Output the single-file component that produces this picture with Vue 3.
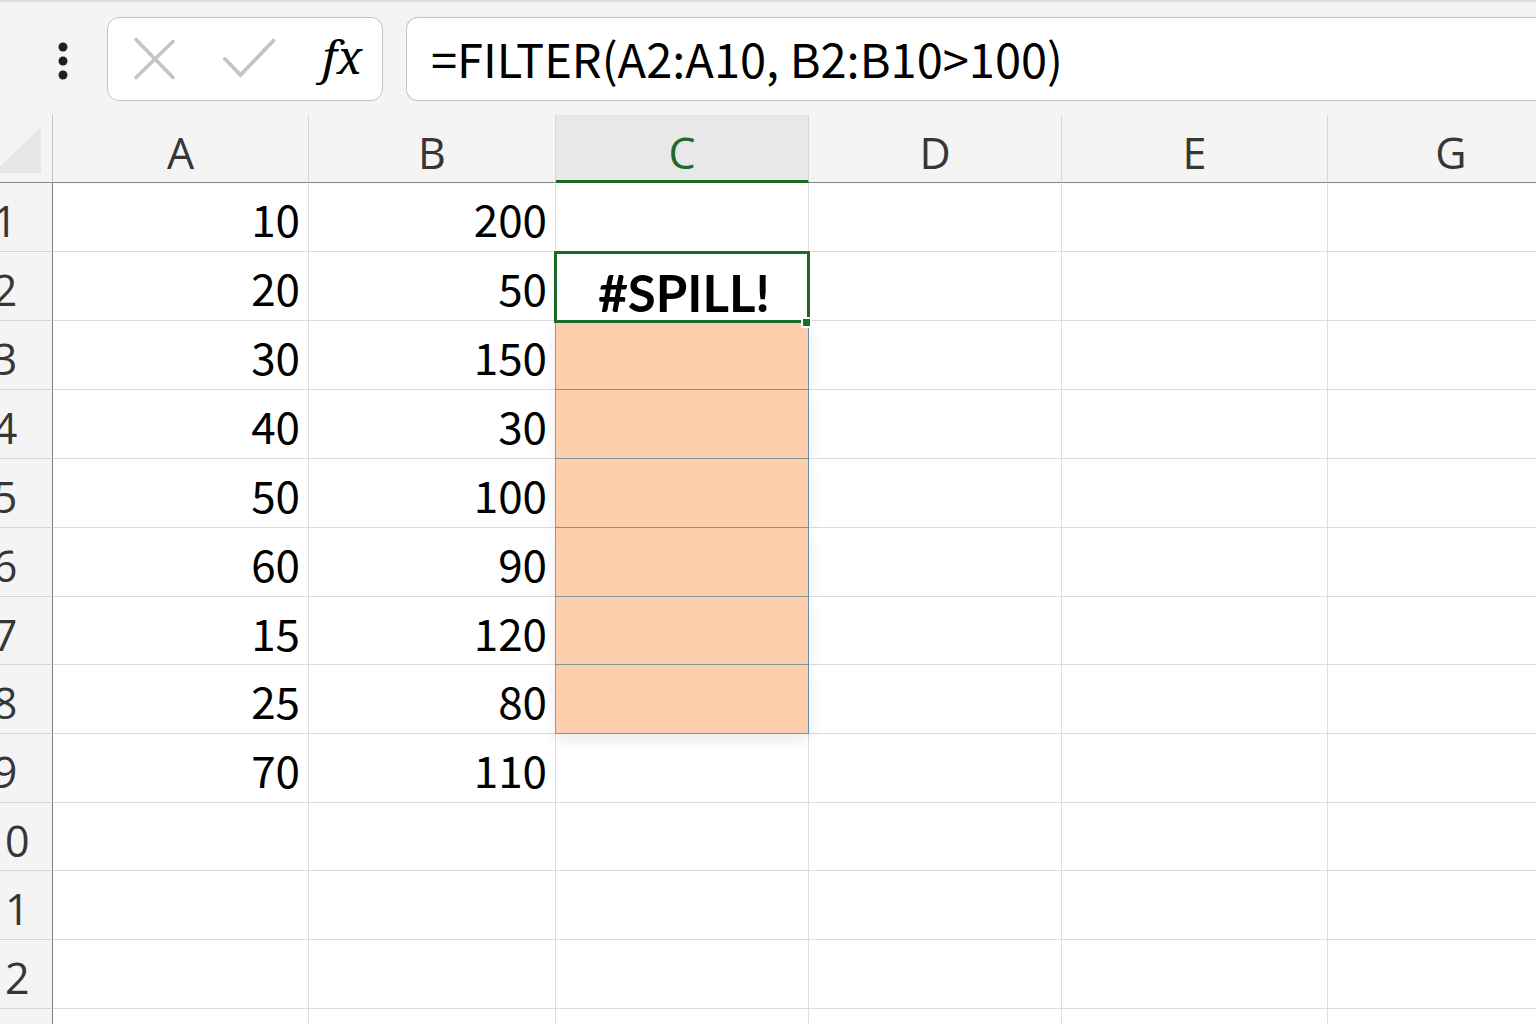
<script setup>
import { ref } from 'vue'

const formula = ref('=FILTER(A2:A10, B2:B10>100)')
const columns = ['A', 'B', 'C', 'D', 'E', 'G']
const activeColumn = 'C'
const activeRow = 2
const spillRange = { column: 'C', from: 3, to: 8 }

const values = [
  [10, 200], [20, 50], [30, 150], [40, 30], [50, 100],
  [60, 90], [15, 120], [25, 80], [70, 110],
]

const rows = Array.from({ length: 12 }, (_, i) => {
  const [a = '', b = ''] = values[i] || []
  return {
    number: i + 1,
    cells: { A: a, B: b, C: i + 1 === activeRow ? '#SPILL!' : '' },
  }
})

function cellClass(column, row) {
  const inSpill = column === spillRange.column && row >= spillRange.from && row <= spillRange.to
  return {
    active: column === activeColumn && row === activeRow,
    spill: inSpill,
    'spill-end': inSpill && row === spillRange.to,
  }
}
</script>

<template>
  <main class="app">
    <header class="formula-bar">
      <button class="more" type="button" aria-label="More options">
        <svg width="10" height="38" viewBox="0 0 10 38" fill="#1f2020">
          <circle cx="5" cy="5" r="4.5" />
          <circle cx="5" cy="19" r="4.5" />
          <circle cx="5" cy="33" r="4.5" />
        </svg>
      </button>
      <div class="actions">
        <button type="button" aria-label="Cancel">
          <svg width="42" height="44" viewBox="0 0 42 44" fill="none" stroke="#c4c4c4" stroke-width="3.6" stroke-linecap="round">
            <path d="M3 2.5 40 40.5M40 4.5 3 40.5" />
          </svg>
        </button>
        <button type="button" aria-label="Enter">
          <svg width="54" height="44" viewBox="0 0 54 44" fill="none" stroke="#c4c4c4" stroke-width="3.8" stroke-linecap="round">
            <path d="M3 22 18.500 38 51.500 3.500" />
          </svg>
        </button>
        <button class="fx" type="button" aria-label="Insert function">fx</button>
      </div>
      <input v-model="formula" class="formula" type="text" aria-label="Formula" spellcheck="false" />
    </header>

    <div class="sheet">
      <table>
        <colgroup>
          <col class="w-head" />
          <col v-for="c in columns" :key="c" :class="'w-' + c.toLowerCase()" />
        </colgroup>
        <thead>
          <tr>
            <th class="corner">
              <svg width="48" height="46" viewBox="0 0 48 46" fill="#e6e6e6" aria-hidden="true">
                <path d="M48 0V46H0z" />
              </svg>
            </th>
            <th v-for="c in columns" :key="c" scope="col" :class="{ selected: c === activeColumn }">{{ c }}</th>
          </tr>
        </thead>
        <tbody>
          <tr v-for="r in rows" :key="r.number">
            <th scope="row">{{ r.number }}</th>
            <td v-for="c in columns" :key="c" :class="cellClass(c, r.number)">{{ r.cells[c] }}</td>
          </tr>
          <tr>
            <th></th>
            <td v-for="c in columns" :key="c"></td>
          </tr>
        </tbody>
      </table>
    </div>
  </main>
</template>

<style>
body {
  background: #f4f4f4;
}
</style>

<style scoped>
.app {
  height: 100vh;
  display: flex;
  flex-direction: column;
  overflow: hidden;
  background: #f4f4f4;
  border-top: 2px solid #dcdcdc;
  box-sizing: border-box;
}

.formula-bar {
  display: flex;
  align-items: center;
  padding: 15px 0 14px 58px;
}

button {
  display: flex;
  padding: 0;
  border: 0;
  background: none;
}

.more {
  padding-top: 4px;
}

.actions {
  display: flex;
  align-items: center;
  justify-content: space-between;
  box-sizing: border-box;
  width: 276px;
  height: 84px;
  margin: 0 23px 0 39px;
  padding: 0 20px 0 25px;
  border: 1px solid #c3c3c3;
  border-radius: 12px;
  background: #fff;
}

.fx {
  padding-bottom: 6px;
  font: italic 46px/56px "Noto Serif", serif;
  color: #000;
}

.formula {
  flex: 1;
  min-width: 0;
  box-sizing: border-box;
  height: 84px;
  padding: 0 24px 4px;
  border: 1px solid #c3c3c3;
  border-right: 0;
  border-radius: 12px 0 0 12px;
  background: #fff;
  font: 47px "Noto Sans CJK SC", sans-serif;
  color: #000;
  outline: 0;
}

.sheet {
  flex: 1;
  min-height: 0;
  overflow: hidden;
}

/* The row headings are scrolled partly out of view. */
table {
  width: calc(100% + 79px);
  min-width: 1615px;
  margin-left: -40px;
  table-layout: fixed;
  border-collapse: separate;
  border-spacing: 0;
}

.w-head { width: 93px; }
.w-a { width: 256px; }
.w-b { width: 247px; }
.w-c,
.w-d { width: 253px; }
.w-e { width: 266px; }

th,
td {
  box-sizing: border-box;
  height: 69px;
  border-right: 1px solid #dedede;
  border-bottom: 1px solid #dcdcdc;
  vertical-align: top;
}

th {
  padding: 14px 0 0;
  background: #f4f4f4;
  font: 400 43px/48px "Open Sans", sans-serif;
  color: #363636;
  text-align: center;
}

thead th {
  height: 68px;
  border-right-color: #d6d6d6;
  border-bottom-color: #858585;
}

tbody th {
  padding-right: 2px;
  border-right-color: #7d7d7d;
  border-bottom-color: #d4d4d4;
}

thead .corner {
  padding: 12px 11px 0 0;
  border-right-color: #c4c4c4;
}

.corner svg {
  display: block;
  margin-left: auto;
}

thead .selected {
  background: #e8e8e8;
  color: #1c6a2c;
  border-bottom: 3px solid #14691f;
}

td {
  padding: 11px 8px 0 0;
  background: #fff;
  font: 44px/48px "Noto Sans CJK SC", sans-serif;
  color: #000;
  text-align: right;
}

.active {
  position: relative;
  z-index: 1;
  padding: 17px 0 0 4px;
  font: bold 51px/48px Lato, sans-serif;
  text-align: center;
}

.active::before {
  content: "";
  position: absolute;
  inset: -1px -2px -3px;
  border: 3px solid #1b6a2c;
}

.active::after {
  content: "";
  position: absolute;
  right: -2px;
  bottom: -6px;
  width: 7px;
  height: 7px;
  background: #1b7030;
  box-shadow: 0 0 0 2px #fff;
}

.spill {
  background: #fecdab;
  border-color: #7f9496;
  border-right-color: #5f93b0;
  box-shadow: -1px 0 0 #7f9fb0, 0 6px 14px rgba(0, 0, 0, 0.09);
  clip-path: inset(0 -16px 0 -16px);
}

.spill-end {
  clip-path: inset(0 -16px -24px -16px);
}

/* Zoomed row pitch falls just short of 69px. */
tbody tr:nth-child(3n + 7) > * {
  height: 68px;
}
</style>
